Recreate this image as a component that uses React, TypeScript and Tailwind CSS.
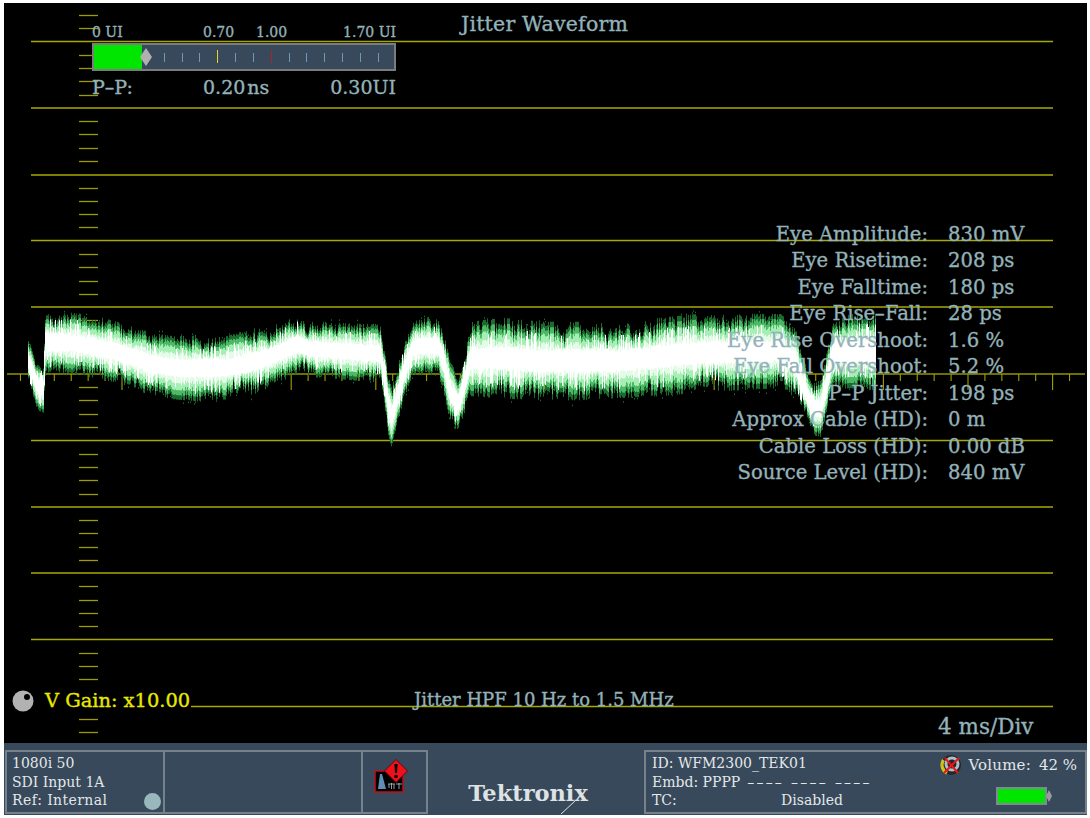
import React from 'react';

const serif = { fontFamily: '"DejaVu Serif", serif' };

// top and bottom of the trace, read off the picture: [x, top, bottom]
const envelope: [number, number, number][] = [
  [28, 341, 382], [33, 352, 398], [38, 366, 408], [43, 368, 410], [45, 313, 372], [70, 316, 370], [90, 318, 374],
  [120, 326, 380], [150, 336, 392], [175, 340, 396], [200, 338, 398], [225, 340, 396], [245, 334, 394],
  [270, 330, 384], [297, 318, 370], [310, 324, 374], [340, 326, 376], [380, 328, 380], [384, 352, 400],
  [388, 378, 432], [391, 390, 444], [396, 376, 424], [402, 350, 402], [412, 326, 372], [422, 320, 372],
  [438, 320, 372], [444, 336, 392], [450, 366, 420], [458, 376, 430], [464, 356, 410], [470, 326, 392],
  [500, 322, 394], [540, 326, 396], [580, 326, 396], [620, 328, 394], [660, 322, 392], [700, 318, 388],
  [740, 318, 386], [780, 318, 384], [795, 330, 396], [803, 362, 412], [812, 384, 432], [820, 384, 434],
  [826, 356, 416], [832, 322, 386], [850, 318, 384], [873, 318, 386],
];

function seeded(a: number) {
  return () => {
    a = (a + 0x6d2b79f5) | 0;
    let t = Math.imul(a ^ (a >>> 15), 1 | a);
    t = (t + Math.imul(t ^ (t >>> 7), 61 | t)) ^ t;
    return ((t ^ (t >>> 14)) >>> 0) / 4294967296;
  };
}

function envAt(x: number) {
  for (let i = 1; i < envelope.length; i++) {
    const [x1, t1, b1] = envelope[i];
    if (x <= x1) {
      const [x0, t0, b0] = envelope[i - 1];
      const k = (x - x0) / (x1 - x0);
      return [t0 + (t1 - t0) * k, b0 + (b1 - b0) * k];
    }
  }
  return [318, 386];
}

function buildTrace() {
  const rnd = seeded(2300);
  const layers = ['', '', '', '', ''];
  let slowUp = 0;
  let slowDown = 0;
  for (let x = 28; x <= 875; x += 1) {
    const [t, b] = envAt(x);
    const c = (t + b) / 2;
    const h = ((b - t) / 2) * 1.06;
    slowUp = slowUp * 0.84 + (rnd() - 0.5) * 0.2;
    slowDown = slowDown * 0.84 + (rnd() - 0.5) * 0.2;
    const up = Math.min(1.06, 0.9 + slowUp + (rnd() - 0.5) * 0.34);
    const down = Math.min(1.06, 0.9 + slowDown + (rnd() - 0.5) * 0.34);
    const seg = (i: number, u: number, d: number) => {
      layers[i] += `M${x + 0.5} ${(c - h * u).toFixed(1)}V${(c + h * d).toFixed(1)}`;
    };
    seg(0, up, down);
    seg(1, up * 0.86, down * 0.86);
    seg(2, up * 0.7, down * 0.7);
    seg(3, up * 0.48, down * 0.48);
    const streakUp = rnd() < 0.24 ? 0.15 + rnd() * 0.35 : 0;
    const streakDown = rnd() < 0.24 ? 0.15 + rnd() * 0.35 : 0;
    seg(4, 0.26 + rnd() * 0.08 + streakUp, 0.26 + rnd() * 0.08 + streakDown);
    if (rnd() < 0.1) {
      layers[0] += `M${x + 0.5} ${(c - h * (up + rnd() * 0.15)).toFixed(1)}v1.5`;
    }
    if (rnd() < 0.1) {
      layers[0] += `M${x + 0.5} ${(c + h * (down + rnd() * 0.15)).toFixed(1)}v1.5`;
    }
  }
  return layers;
}

const trace = buildTrace();
const traceColors = ['#1a6b2e', '#4db866', '#a5eeb4', '#e4fbe8', '#ffffff'];

const majors = [41.5, 108, 175, 240.5, 307, 440.5, 507, 573, 639.5];
const minors = [15, 28, 55, 68, 81, 95, 121, 134, 148, 161, 188, 201, 214, 227, 254, 267, 281, 294, 320, 334, 347, 360, 387, 400, 414, 427, 454, 467, 480, 494, 520, 533, 547, 560, 586, 600, 613, 626, 653, 666, 679, 693, 719, 732];
const hTicks = Array.from({ length: 63 }, (_, i) => i - 6);
const barTicks = [164, 182, 199, 235, 253, 289, 306, 324, 342, 360, 378];

const readings = [
  ['Eye Amplitude:', '830 mV'],
  ['Eye Risetime:', '208 ps'],
  ['Eye Falltime:', '180 ps'],
  ['Eye Rise–Fall:', '28 ps'],
  ['Eye Rise Overshoot:', '1.6 %'],
  ['Eye Fall Overshoot:', '5.2 %'],
  ['P–P Jitter:', '198 ps'],
  ['Approx Cable (HD):', '0 m'],
  ['Cable Loss (HD):', '0.00 dB'],
  ['Source Level (HD):', '840 mV'],
];

const Graticule: React.FC = () => (
  <svg className="absolute inset-0 w-[1083px] h-[740px]" viewBox="4 3 1083 740">
    {majors.map((y) => (
      <line key={y} x1={31} x2={1053} y1={y} y2={y} stroke="#a8a800" strokeWidth={1.3} />
    ))}
    <line x1={190} x2={1053} y1={706.5} y2={706.5} stroke="#a8a800" strokeWidth={1.3} />
    <line x1={7} x2={1085} y1={374} y2={374} stroke="#949400" strokeWidth={1.6} />
    {minors.map((y) => (
      <line key={y} x1={79} x2={98} y1={y + 0.5} y2={y + 0.5} stroke="#9c9c00" strokeWidth={1.3} />
    ))}
    {hTicks.map((k) => {
      const x = 122 + k * 16.92;
      return <line key={k} x1={x} x2={x} y1={374} y2={k % 5 === 0 ? 390 : 381} stroke="#a0a000" strokeWidth={1.1} />;
    })}
    <g className="blur-[0.5px]">
      {trace.map((d, i) => (
        <path key={i} d={d} stroke={traceColors[i]} strokeWidth={1} fill="none" />
      ))}
    </g>
    <path d="M874.5 380V401" stroke="#9fe8ae" strokeWidth={1.5} />
  </svg>
);

const KnobIcon: React.FC = () => (
  <svg width="22" height="22" viewBox="0 0 22 22">
    <circle cx="11" cy="11" r="10.5" fill="#b2b2b2" />
    <circle cx="15" cy="7" r="3" fill="#000" />
  </svg>
);

const AlertIcon: React.FC = () => (
  <svg width="36" height="36" viewBox="0 0 36 36">
    <rect x="1" y="12" width="28" height="21" fill="#000" stroke="#c0101a" strokeWidth="1.5" />
    <path d="M4 30 L6 15 L8 15 L12 30 Z" fill="#5f8fb4" />
    <path d="M14 25H21M17.5 24V30M15 25V29M20 25V30M22 25H28M25 24V30" stroke="#b8c6cc" strokeWidth="0.8" fill="none" />
    <path d="M22 0.5 L33.5 12 L22 23.5 L10.5 12 Z" fill="#f0101a" stroke="#5a0a10" strokeWidth="1" />
    <path d="M20.4 5 H23.6 L23 14 H21 Z" fill="#000" />
    <circle cx="22" cy="17.5" r="1.8" fill="#000" />
  </svg>
);

const MutedIcon: React.FC = () => (
  <svg width="22" height="22" viewBox="0 0 22 22">
    <circle cx="11" cy="11" r="10" fill="#20282c" />
    <path d="M3.5 6 A9 9 0 0 0 7 19" stroke="#cfc21c" strokeWidth="3.2" fill="none" />
    <circle cx="12" cy="10" r="6" fill="none" stroke="#a9c0c6" strokeWidth="3" />
    <path d="M4 19 L19 4 M5 4 L18 19" stroke="#f01418" strokeWidth="2" />
  </svg>
);

const App: React.FC = () => {
  return (
    <div className="w-[1090px] h-[818px] bg-white pt-[3px] pl-[4px] pr-[3px] pb-[3px] flex flex-col" style={serif}>
      {/* scope display */}
      <div className="relative h-[740px] bg-black overflow-hidden text-[#93b2b9] [-webkit-text-stroke:0.35px]">
        <Graticule />

        <div className="absolute left-[457px] top-[8px] text-[20.5px] leading-[26px] tracking-[0.2px]">Jitter Waveform</div>

        {/* jitter meter */}
        <div className="absolute left-[88px] top-[20px] w-[304px]">
          <div className="relative h-[18px] text-[14px] leading-[18px]">
            <span>0 UI</span>
            <span className="absolute left-[111px] top-0">0.70</span>
            <span className="absolute left-[164px] top-0">1.00</span>
            <span className="absolute right-0 top-0">1.70 UI</span>
          </div>
          <div className="relative h-[28px] mt-[2px] border-2 border-[#7c7c7c] bg-[#37495a]">
            <div className="h-full w-[48px] bg-[#00e600]" />
            <div className="absolute left-[46px] top-[3px] w-[12px] h-[18px] bg-[#b0b0b0] [clip-path:polygon(50%_0,100%_50%,50%_100%,0_50%)]" />
            {barTicks.map((x) => (
              <div key={x} className="absolute top-[8px] h-[9px] w-px bg-[#6f98b8]" style={{ left: x - 94 }} />
            ))}
            <div className="absolute left-[123px] top-[5px] h-[13px] w-px bg-[#e0d830]" />
            <div className="absolute left-[177px] top-[5px] h-[13px] w-px bg-[#a8242c]" />
          </div>
          <div className="flex mt-[3px] text-[19px] leading-[26px]">
            <span className="w-[111px]">P–P:</span>
            <span>0.20</span>
            <span className="ml-[2px]">ns</span>
            <span className="ml-auto">0.30UI</span>
          </div>
        </div>

        {/* measurements */}
        <div className="absolute left-[600px] top-[219px] w-[460px] grid grid-cols-[324px_1fr] gap-x-[20px] text-[19.6px] leading-[26.44px]">
          {readings.map(([label, value]) => (
            <React.Fragment key={label}>
              <div className="text-right whitespace-nowrap">{label}</div>
              <div className="whitespace-nowrap">{value}</div>
            </React.Fragment>
          ))}
        </div>

        <div className="absolute left-[8px] top-[686px] flex items-center gap-[11px] bg-black pr-[1px]">
          <KnobIcon />
          <span className="text-[19.4px] leading-[24px] text-[#e8e800]">V Gain: x10.00</span>
        </div>
        <div className="absolute left-[410px] top-[685px] text-[18px] leading-[24px]">Jitter HPF 10 Hz to 1.5 MHz</div>
        <div className="absolute left-[934px] top-[711px] text-[21.5px] leading-[26px]">4 ms/Div</div>
      </div>

      {/* status bar */}
      <div className="h-[72px] bg-[#37495a] flex items-end pb-[1px] pl-px text-[14px] leading-[18.5px] text-[#e3e7e9]">
        <div className="relative w-[160px] h-[64px] border-2 border-[#75818b] pl-[5px] pt-[2px]">
          <div>1080i 50</div>
          <div>SDI Input 1A</div>
          <div className="tracking-[0.4px]">Ref: Internal</div>
          <div className="absolute right-[2px] bottom-[2px] w-[17px] h-[17px] rounded-full bg-[#99b8bd]" />
        </div>
        <div className="w-[198px] h-[64px] border-y-2 border-r-2 border-[#75818b]" />
        <div className="w-[65px] h-[64px] border-y-2 border-r-2 border-[#75818b] flex items-start pl-[11px] pt-[7px]">
          <AlertIcon />
        </div>
        <div className="relative flex-1 h-[64px] text-center">
          <span className="block pt-[28px] pr-[16px] text-[22.5px] font-bold leading-[30px] text-[#dfe2e2]">Tektronix</span>
          <svg className="absolute left-[132px] top-[50px]" width="16" height="14" viewBox="0 0 16 14">
            <path d="M15 1 L1 14" stroke="#dfe2e2" strokeWidth="1" />
          </svg>
        </div>
        <div className="w-[443px] h-[64px] border-2 border-[#75818b] flex justify-between pl-[6px] pr-[8px] pt-[2px]">
          <div className="w-[280px]">
            <div>ID: WFM2300_TEK01</div>
            <div className="flex gap-[7px]">
              <span>Embd: PPPP</span>
              <span className="tracking-[2.2px]">––––</span>
              <span className="tracking-[2.2px]">––––</span>
              <span className="tracking-[2.2px]">––––</span>
            </div>
            <div className="flex">
              <span className="w-[129px]">TC:</span>
              <span>Disabled</span>
            </div>
          </div>
          <div className="flex flex-col items-end">
            <div className="flex items-center gap-[6px] text-[15px]">
              <MutedIcon />
              <span className="tracking-[0.2px]">Volume:</span>
              <span className="ml-[2px]">42 %</span>
            </div>
            <div className="flex items-center mt-[11px] mr-[25px]">
              <div className="w-[51px] h-[18px] border-2 border-[#7c8a92] bg-[#00e600]" />
              <div className="w-[6px] h-[12px] -ml-px bg-[#9a9a9a] [clip-path:polygon(50%_0,100%_50%,50%_100%,0_50%)]" />
            </div>
          </div>
        </div>
      </div>
    </div>
  );
};

export default App;
